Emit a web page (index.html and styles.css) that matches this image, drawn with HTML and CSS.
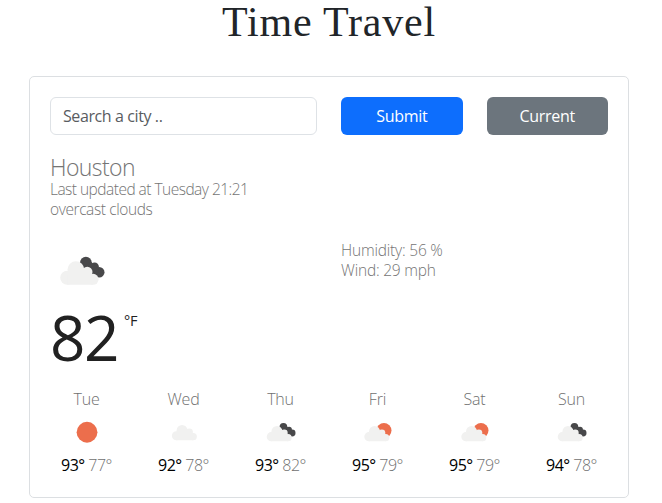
FILE: index.html
```html
<!DOCTYPE html>
<html lang="en">
<head>
<meta charset="utf-8">
<title>Time Travel</title>
<link rel="stylesheet" href="styles.css">
</head>
<body>
<svg class="defs" aria-hidden="true">
  <defs>
    <g id="cloud" fill="#f1f1f0">
      <circle cx="7.3" cy="21" r="7"/><circle cx="16" cy="12.8" r="8.4"/><circle cx="27.3" cy="15.3" r="5.3"/><circle cx="33.2" cy="22.5" r="5.5"/>
      <path d="M7.3 14.5H28L33 18V28H7.3z"/>
    </g>
    <symbol id="broken" viewBox="0 0 50 50">
      <g transform="translate(3.9 10.8)">
        <g fill="#48484a"><circle cx="26" cy="5.9" r="5.9"/><circle cx="34.7" cy="10" r="4.3"/><circle cx="39.3" cy="15.4" r="5.3"/><path d="M25 11L31 5L39 12L37 20H30z"/></g>
        <use href="#cloud"/>
      </g>
    </symbol>
    <symbol id="partly" viewBox="0 0 50 50">
      <g transform="translate(4.8 10.8)"><circle cx="30.5" cy="11.6" r="11.6" fill="#ec6e4c"/><use href="#cloud"/></g>
    </symbol>
    <symbol id="cloudy" viewBox="0 0 50 50"><use href="#cloud" transform="translate(7.2 9.3)"/></symbol>
    <symbol id="sun" viewBox="0 0 50 50"><circle cx="26.2" cy="25" r="16" fill="#ec6e4c"/></symbol>
  </defs>
</svg>
<h1 class="title">Time Travel</h1>
<main class="card">
  <form class="search">
    <input class="field" type="text" placeholder="Search a city ..">
    <button class="btn primary" type="button">Submit</button>
    <button class="btn secondary" type="button">Current</button>
  </form>
  <section class="overview">
    <h2 class="city">Houston</h2>
    <p class="line updated">Last updated at Tuesday 21:21</p>
    <p class="line sky">overcast clouds</p>
  </section>
  <section class="now">
    <div>
      <svg class="now-icon"><use href="#broken"/></svg>
      <div class="temp"><span class="degrees">82</span><span class="unit">°F</span></div>
    </div>
    <div class="details">
      <p class="line humidity">Humidity: 56 %</p>
      <p class="line wind">Wind: 29 mph</p>
    </div>
  </section>
  <section class="forecast">
    <div class="day"><div class="name">Tue</div><svg class="icon"><use href="#sun"/></svg><div class="range"><span class="max">93°</span> <span>77°</span></div></div>
    <div class="day"><div class="name">Wed</div><svg class="icon"><use href="#cloudy"/></svg><div class="range"><span class="max">92°</span> <span>78°</span></div></div>
    <div class="day"><div class="name">Thu</div><svg class="icon"><use href="#broken"/></svg><div class="range"><span class="max">93°</span> <span>82°</span></div></div>
    <div class="day"><div class="name">Fri</div><svg class="icon"><use href="#partly"/></svg><div class="range"><span class="max">95°</span> <span>79°</span></div></div>
    <div class="day"><div class="name">Sat</div><svg class="icon"><use href="#partly"/></svg><div class="range"><span class="max">95°</span> <span>79°</span></div></div>
    <div class="day"><div class="name">Sun</div><svg class="icon"><use href="#broken"/></svg><div class="range"><span class="max">94°</span> <span>78°</span></div></div>
  </section>
</main>
</body>
</html>
```
FILE: styles.css
```css
* { box-sizing: border-box; }
html { overflow: hidden; }
body {
  margin: 0;
  width: 658px;
  background: #fff;
  color: #212529;
  font: 16px/24px "Open Sans", "Noto Sans", sans-serif;
}
h1, h2, p { margin: 0; font-weight: 400; }
.defs { position: absolute; width: 0; height: 0; }
.title {
  height: 76px;
  text-align: center;
  font: 42px/44px "Liberation Serif", serif;
  letter-spacing: 0.8px;
}
.card {
  width: 600px;
  height: 422px;
  margin: 0 auto;
  padding: 20px;
  border: 1px solid #dcdfe2;
  border-radius: 5px;
}
.search {
  display: grid;
  grid-template-columns: 267px 121.5px 121.5px;
  gap: 24px;
}
.field, .btn {
  height: 38px;
  border-radius: 6px;
  font: inherit;
  letter-spacing: -0.4px;
}
.field {
  width: 100%;
  padding: 6px 12px;
  border: 1px solid #dee2e6;
}
.field::placeholder { color: #595c5f; opacity: 1; }
.btn { padding: 0; border: 0; color: #fff; letter-spacing: -0.3px; }
.primary { background: #0d6efd; }
.secondary { background: #6c757d; }
.overview { padding-top: 20px; color: #747474; font-weight: 300; }
.city { height: 24px; font-size: 23px; line-height: 24px; font-weight: 300; letter-spacing: -0.6px; }
.line { font-size: 15.5px; line-height: 20px; font-weight: 300; letter-spacing: -0.3px; white-space: nowrap; }
.updated { letter-spacing: -0.52px; }
.sky { letter-spacing: -0.4px; }
.now {
  display: grid;
  grid-template-columns: 267px 267px;
  gap: 24px;
  height: 149px;
  padding-top: 7px;
}
.now-icon { display: block; width: 50px; height: 50px; margin: 20px 0 0 6px; }
.details { padding-top: 14px; color: #747474; }
.details .line { letter-spacing: -0.2px; }
.temp { display: flex; height: 80px; margin-top: 1px; color: #212121; }
.degrees { font-size: 62px; line-height: 80px; letter-spacing: -1.5px; }
.unit { margin: 14px 0 0 6px; font-size: 14.5px; line-height: 20px; letter-spacing: -0.2px; }
.forecast {
  display: grid;
  grid-template-columns: repeat(6, 97px);
  margin: 0 -12px;
  padding-top: 19px;
}
.day { text-align: center; color: #707070; }
.name { height: 29px; letter-spacing: -0.2px; font-weight: 300; }
.icon { display: block; width: 32.5px; height: 32.5px; margin: 0 auto; }
.range { margin-top: 4.5px; letter-spacing: -0.5px; font-weight: 300; }
.max { color: #000; font-weight: 400; }
```
